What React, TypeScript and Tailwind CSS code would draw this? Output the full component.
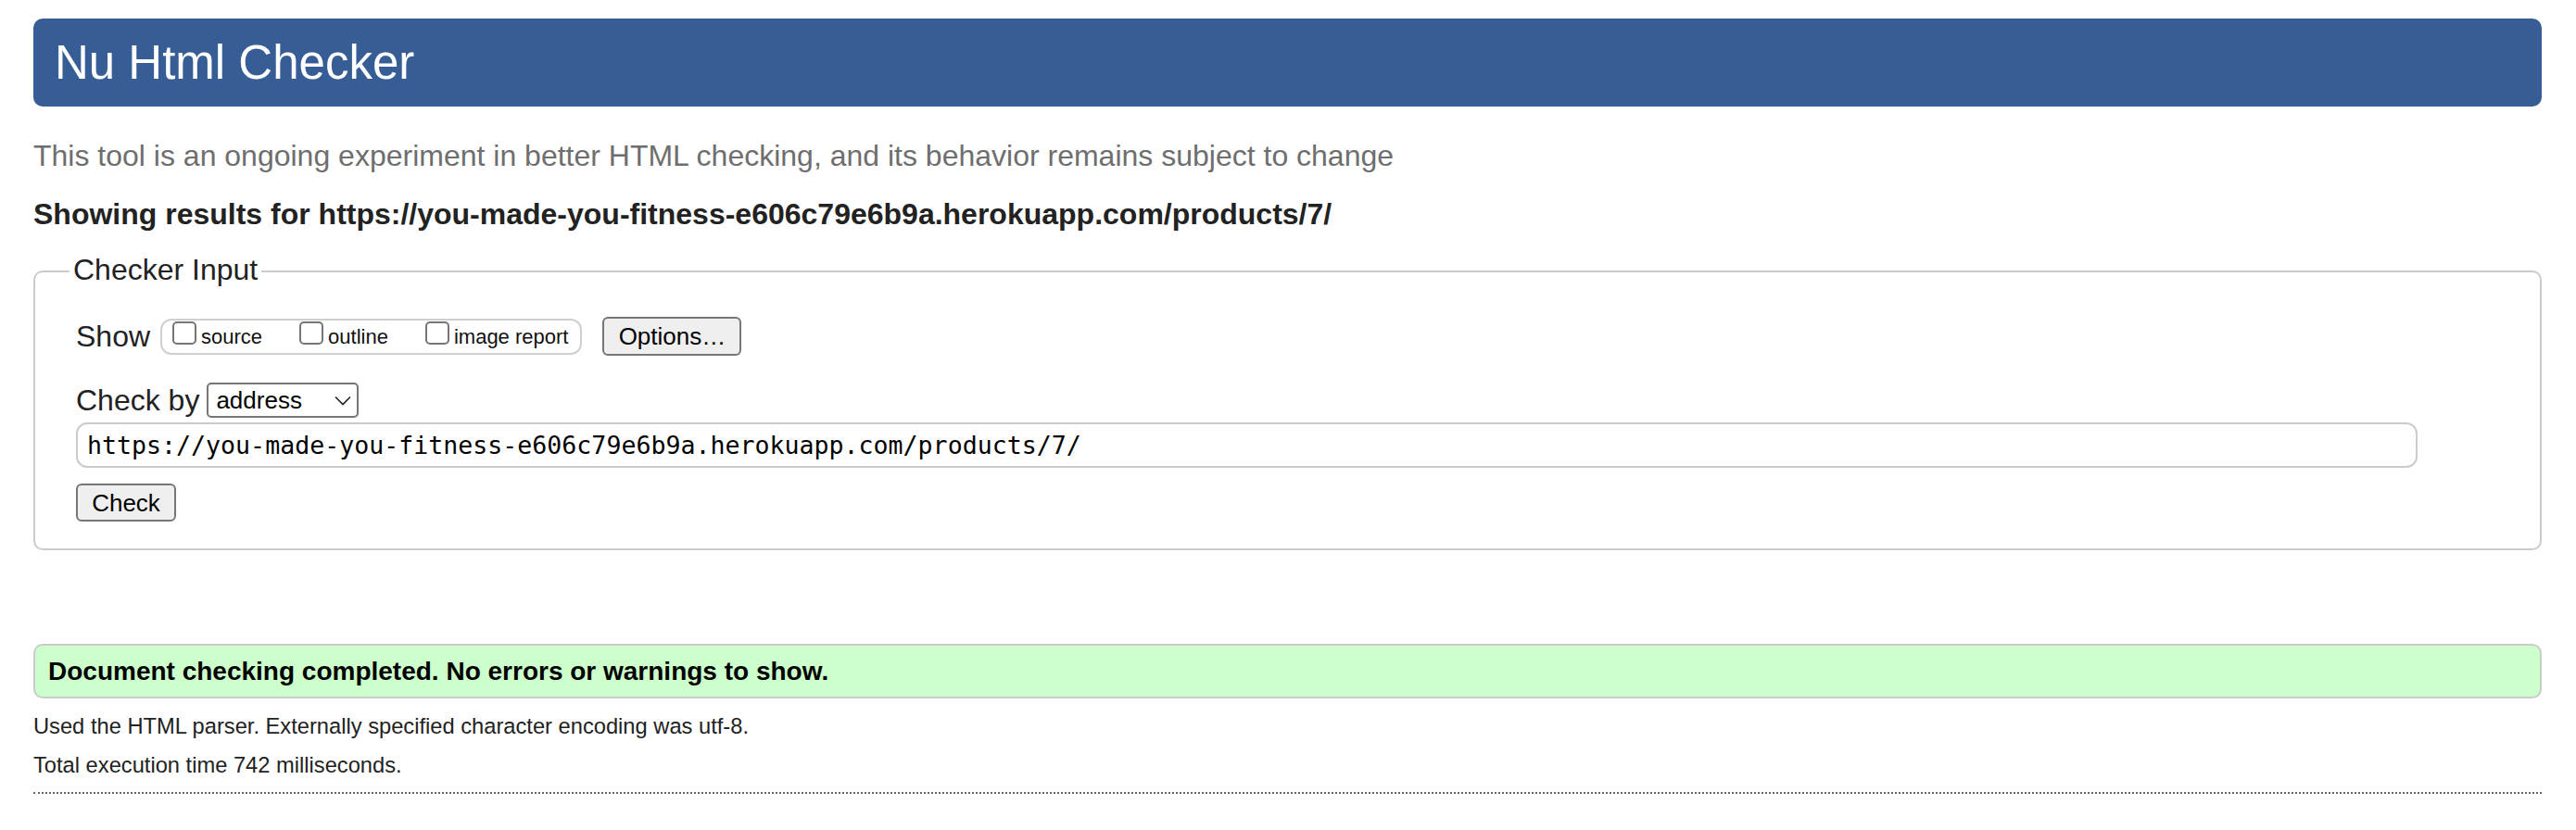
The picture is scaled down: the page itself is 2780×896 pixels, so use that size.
import React from "react";

function Checkbox({ label, first }: { label: string; first?: boolean }) {
  return (
    <div className={"flex items-end " + (first ? "" : "ml-[40px]")}>
      <span className="mb-[3px] block h-[25px] w-[26px] rounded-[5px] border-2 border-[#767676] bg-white" />
      <span className="ml-[5px] text-[22px] leading-[22px] text-[#111]">{label}</span>
    </div>
  );
}

export default function App() {
  return (
    <div className="min-h-screen bg-white pl-[36px] pr-[37px] pt-[20px] font-['Liberation_Sans',Arial,sans-serif] text-[#222]">
      <header className="flex h-[95px] items-center rounded-[10px] bg-[#365d95] pl-[23px]">
        <h1 className="text-[51px] leading-none font-normal text-white">Nu Html Checker</h1>
      </header>

      <p className="mt-[33px] text-[32px] leading-[40px] text-[#6e6e6e]">
        This tool is an ongoing experiment in better HTML checking, and its behavior remains subject to change
      </p>

      <p className="mt-[23px] text-[32px] font-bold leading-[40px] text-[#222]">
        Showing results for https://you-made-you-fitness-e606c79e6b9a.herokuapp.com/products/7/
      </p>

      <fieldset className="mt-[24px] rounded-[10px] border-2 border-[#cbcbcb] pb-[29px] pl-[44px] pr-[44px]">
        <legend className="ml-[-7px] px-[4px] pb-[4px] text-[32px] leading-[32px] text-[#222]">Checker Input</legend>
        <div className="pt-[31px]">
          <div className="flex h-[42px] items-center">
            <span className="text-[32px] leading-[36px] text-[#222]">Show</span>
            <div className="ml-[11px] flex h-[39px] items-start rounded-[12px] border-2 border-[#cfcfcf] pl-[11px] pr-[13px] pt-[1px]">
              <Checkbox label="source" first />
              <Checkbox label="outline" />
              <Checkbox label="image report" />
            </div>
            <button className="ml-[22px] flex h-[42px] w-[150px] items-center justify-center rounded-[6px] border-2 border-[#767676] bg-[#efefef] text-[26px] leading-none text-black">
              Options…
            </button>
          </div>

          <div className="mt-[29px] flex h-[38px] items-center">
            <span className="text-[32px] leading-[36px] text-[#222]">Check by</span>
            <div className="ml-[8px] flex h-[38px] w-[164px] items-center rounded-[5px] border-2 border-[#767676] bg-white pl-[8px] pr-[6px]">
              <span className="text-[26px] leading-none text-black">address</span>
              <svg className="ml-auto" width="18" height="11" viewBox="0 0 18 11" fill="none">
                <path d="M1 1.5 L9 9.5 L17 1.5" stroke="#222" strokeWidth="1.6" />
              </svg>
            </div>
          </div>

          <div className="mt-[5px] flex h-[49px] w-[2527px] items-center rounded-[12px] border-2 border-[#cbcbcb] bg-white pl-[10px]">
            <span className="font-['DejaVu_Sans_Mono',monospace] text-[26.6px] leading-[32px] text-black">
              https://you-made-you-fitness-e606c79e6b9a.herokuapp.com/products/7/
            </span>
          </div>

          <button className="mt-[17px] flex h-[41px] w-[108px] items-center justify-center rounded-[6px] border-2 border-[#767676] bg-[#efefef] text-[26px] leading-none text-black">
            Check
          </button>
        </div>
      </fieldset>

      <div className="mt-[101px] flex h-[59px] items-center rounded-[10px] border-2 border-[#cbcbcb] bg-[#ccffcc] pl-[14px]">
        <span className="text-[28px] font-bold leading-none text-black">
          Document checking completed. No errors or warnings to show.
        </span>
      </div>

      <p className="mt-[14px] text-[23.7px] leading-[32px] text-[#222]">
        Used the HTML parser. Externally specified character encoding was utf-8.
      </p>
      <p className="mt-[10px] text-[23.7px] leading-[32px] text-[#222]">Total execution time 742 milliseconds.</p>

      <hr className="mt-[13px] border-0 border-t-2 border-dotted border-[#666]" />
    </div>
  );
}
